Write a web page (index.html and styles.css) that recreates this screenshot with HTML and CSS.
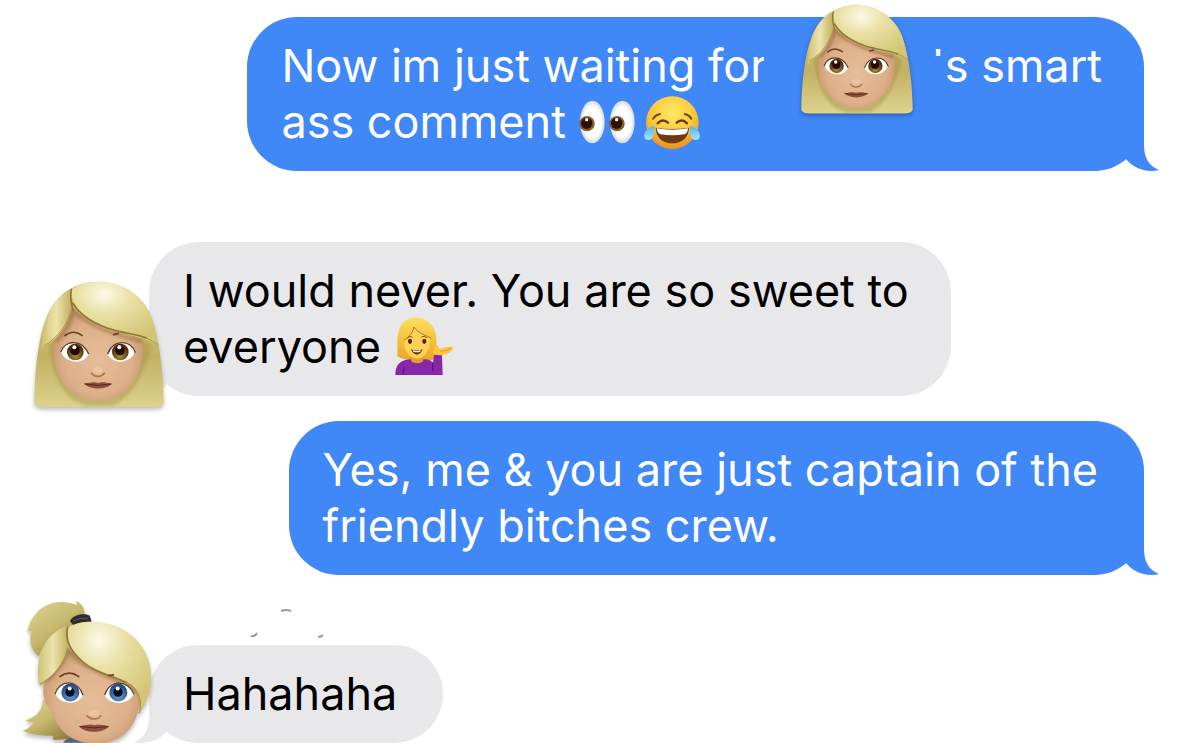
FILE: index.html
```html
<!DOCTYPE html>
<html lang="en">

<head>
    <meta charset="UTF-8">
    <meta name="viewport" content="width=device-width, initial-scale=1.0">
    <title>Messages</title>
    <link rel="stylesheet" href="styles.css">
</head>

<body>

    <!-- Shared drawings -->
    <svg class="defs" aria-hidden="true">
        <defs>
            <linearGradient id="hairBack" x1="0" y1="0" x2="0" y2="1">
                <stop offset="0" stop-color="#d8cc80"/>
                <stop offset=".6" stop-color="#c2b164"/>
                <stop offset="1" stop-color="#ddd28c"/>
            </linearGradient>
            <radialGradient id="hairFront" cx=".38" cy=".2" r=".8">
                <stop offset="0" stop-color="#fcfae6"/>
                <stop offset=".4" stop-color="#e9e0a4"/>
                <stop offset="1" stop-color="#d3c574"/>
            </radialGradient>
            <linearGradient id="hairSide" x1="0" y1="0" x2="1" y2="0">
                <stop offset="0" stop-color="#cfc172"/>
                <stop offset=".5" stop-color="#ece4ad"/>
                <stop offset="1" stop-color="#c3b15d"/>
            </linearGradient>
            <linearGradient id="ponytail" x1="0" y1="0" x2=".8" y2="1">
                <stop offset="0" stop-color="#ded391"/>
                <stop offset=".5" stop-color="#c8b96f"/>
                <stop offset="1" stop-color="#8f7c3b"/>
            </linearGradient>
            <radialGradient id="skin" cx=".5" cy=".55" r=".55">
                <stop offset="0" stop-color="#e6bd98"/>
                <stop offset=".7" stop-color="#ddb08a"/>
                <stop offset="1" stop-color="#c59670"/>
            </radialGradient>
            <radialGradient id="irisBrown" cx=".5" cy=".75" r=".6">
                <stop offset="0" stop-color="#b08a2e"/>
                <stop offset="1" stop-color="#4d2a10"/>
            </radialGradient>
            <radialGradient id="irisBlue" cx=".5" cy=".7" r=".6">
                <stop offset="0" stop-color="#6f9fd8"/>
                <stop offset="1" stop-color="#244a86"/>
            </radialGradient>
            <radialGradient id="joyFace" cx=".5" cy=".3" r=".7">
                <stop offset="0" stop-color="#ffe767"/>
                <stop offset=".6" stop-color="#fcc838"/>
                <stop offset="1" stop-color="#e88f20"/>
            </radialGradient>
            <radialGradient id="eyeball" cx=".5" cy=".5" r=".5">
                <stop offset=".7" stop-color="#ffffff"/>
                <stop offset="1" stop-color="#d5d9e2"/>
            </radialGradient>
            <linearGradient id="goldHair" x1="0" y1="0" x2="0" y2="1">
                <stop offset="0" stop-color="#ffdf5c"/>
                <stop offset="1" stop-color="#e9a526"/>
            </linearGradient>
            <linearGradient id="tear" x1="0" y1="0" x2="0" y2="1">
                <stop offset="0" stop-color="#4db4ec"/>
                <stop offset="1" stop-color="#a4e4fb"/>
            </linearGradient>
            <filter id="soft"><feGaussianBlur stdDeviation="4"/></filter>

            <path id="tail" d="M24 0V34C24 47 29 55 39 59C28 62 14 58 6 48V0Z"/>

            <symbol id="woman" viewBox="40 30 396 390">
                <path fill="url(#hairBack)" d="M44 398C45 310 55 210 78 150C106 70 170 35 235 35C308 35 372 78 395 142C422 215 431 320 432 398Q430 410 400 411H72Q46 410 44 398Z"/>
                <path fill="#a08b3f" opacity=".4" filter="url(#soft)" d="M85 222C98 290 110 350 160 390L200 408H280C340 380 375 310 395 225L360 200H110Z"/>
                <path fill="url(#skin)" d="M157 112C150 150 128 185 106 212C100 235 102 260 106 282C116 340 168 394 235 394C302 394 353 340 364 282C369 258 370 232 369 210C290 190 205 160 157 112Z"/>
                <path fill="none" stroke="#9a6c43" stroke-width="10" opacity=".6" filter="url(#soft)" d="M110 215C140 185 157 150 160 120C205 170 290 195 365 214"/>
                <path fill="url(#hairFront)" d="M155 62C172 43 200 35 235 35C308 35 372 78 395 142C404 168 411 196 414 224C370 200 310 192 250 167C198 146 156 108 155 62Z"/>
                <path fill="url(#hairSide)" d="M150 58C162 112 150 188 66 236C70 168 88 92 150 58Z"/>
                <path fill="none" stroke="#8f7833" stroke-width="5" stroke-linecap="round" d="M155 58C150 80 156 105 160 120M160 100C180 135 220 158 262 174C310 190 350 192 380 204"/>
                <path fill="none" stroke="#a9954a" stroke-width="3" d="M157 112C146 160 118 200 72 229M380 204Q400 212 415 224"/>
                <path fill="none" stroke="#67401f" stroke-width="5" stroke-linecap="round" d="M136 197Q160 177 187 196M282 194L296 190"/>
                <path fill="#fff" d="M124 246C135 212 188 208 207 252C196 283 140 284 124 246ZM264 252C282 209 333 211 346 246C330 284 278 283 264 252Z"/>
                <path fill="none" stroke="#5e3b20" stroke-width="4" d="M123 247C137 208 187 206 207 252M264 252C281 207 333 208 347 248"/>
                <circle cx="167" cy="246" r="25" fill="url(#irisBrown)"/>
                <circle cx="302" cy="246" r="25" fill="url(#irisBrown)"/>
                <circle cx="166" cy="242" r="14" fill="#200b04"/>
                <circle cx="301" cy="242" r="14" fill="#200b04"/>
                <circle cx="164" cy="232" r="6" fill="#fff"/>
                <circle cx="299" cy="232" r="6" fill="#fff"/>
                <ellipse cx="235" cy="300" rx="16" ry="9" fill="#ebc5a1"/>
                <path fill="none" stroke="#b0774f" stroke-width="5" stroke-linecap="round" d="M216 310Q223 320 234 319Q247 320 254 310"/>
                <path fill="#8c4f3b" d="M193 341C215 338 224 335 235 339C248 335 256 338 277 341C260 360 212 360 193 341Z"/>
                <path fill="none" stroke="#512b20" stroke-width="3" d="M195 342Q235 350 275 342"/>
            </symbol>

            <symbol id="womanPonytail" viewBox="30 25 399 434">
                <path fill="url(#ponytail)" d="M86 200C62 180 55 150 66 122L53 126C62 72 105 32 165 37C180 38 194 42 202 46L198 33C218 42 226 62 225 82L240 102L150 135C115 150 96 175 86 200Z"/>
                <path fill="url(#ponytail)" d="M98 330C98 360 84 378 47 392C58 399 64 398 72 398C60 412 50 420 38 423C65 436 98 438 130 438L128 450C170 450 190 445 200 440L120 330Z"/>
                <path fill="#54647f" d="M160 459C170 438 210 440 230 459Z"/>
                <path fill="url(#skin)" d="M168 170C150 215 128 250 104 272C93 310 105 350 122 358C140 420 182 459 255 462C320 462 365 430 382 372C394 340 396 310 390 272C310 255 225 225 168 170Z"/>
                <path fill="#2d2c2e" d="M180 94C187 76 220 68 239 77L245 96C225 94 204 98 190 106Z"/>
                <path fill="none" stroke="#5a5a5d" stroke-width="3" d="M190 94Q210 81 234 86"/>
                <path fill="none" stroke="#9a6c43" stroke-width="12" opacity=".6" filter="url(#soft)" d="M110 275C150 230 165 210 174 180C220 245 310 255 384 305"/>
                <path fill="url(#hairFront)" d="M174 112C205 95 243 92 280 99C358 112 418 170 423 250C427 300 410 342 387 373C398 337 387 295 350 278C300 257 246 247 206 205C180 182 165 150 174 112Z"/>
                <path fill="url(#hairSide)" d="M172 108C181 170 168 234 88 286C73 214 96 134 172 108Z"/>
                <path fill="none" stroke="#8f7833" stroke-width="5" stroke-linecap="round" d="M173 112C164 150 182 184 214 212C250 246 300 254 350 278"/>
                <path fill="none" stroke="#a9954a" stroke-width="4" d="M176 176C160 230 126 264 90 284M350 278C387 296 397 335 388 370"/>
                <path fill="none" stroke="#67401f" stroke-width="5" stroke-linecap="round" d="M150 260Q176 240 206 260M296 257L310 255"/>
                <path fill="#fff" d="M136 312C148 271 202 268 219 316C207 347 150 347 136 312ZM284 316C300 268 355 272 371 312C358 348 300 347 284 316Z"/>
                <path fill="none" stroke="#5e4430" stroke-width="4" d="M135 313C148 269 202 266 219 316M284 316C300 266 355 270 372 313"/>
                <circle cx="181" cy="308" r="27" fill="url(#irisBlue)"/>
                <circle cx="325" cy="308" r="27" fill="url(#irisBlue)"/>
                <circle cx="180" cy="307" r="14" fill="#0a1122"/>
                <circle cx="324" cy="307" r="14" fill="#0a1122"/>
                <circle cx="179" cy="296" r="6" fill="#fff"/>
                <circle cx="323" cy="296" r="6" fill="#fff"/>
                <ellipse cx="252" cy="370" rx="17" ry="9" fill="#ebc5a1"/>
                <path fill="none" stroke="#b0774f" stroke-width="5" stroke-linecap="round" d="M231 378Q240 389 252 387Q265 389 272 378"/>
                <path fill="#8c4f3b" d="M207 409C229 406 241 402 253 406C266 402 275 406 297 409C281 431 223 431 207 409Z"/>
                <path fill="none" stroke="#512b20" stroke-width="3" d="M209 410Q252 418 295 410"/>
            </symbol>

            <symbol id="eyes" viewBox="66 42 168 168">
                <ellipse cx="106" cy="126" rx="37" ry="64" fill="url(#eyeball)"/>
                <ellipse cx="196" cy="126" rx="37" ry="64" fill="url(#eyeball)"/>
                <circle cx="90" cy="131" r="23" fill="#8a5a2b"/>
                <circle cx="180" cy="131" r="23" fill="#8a5a2b"/>
                <circle cx="89" cy="130" r="17" fill="#2b1206"/>
                <circle cx="179" cy="130" r="17" fill="#2b1206"/>
                <circle cx="89" cy="119" r="5" fill="#fff"/>
                <circle cx="179" cy="119" r="5" fill="#fff"/>
            </symbol>

            <symbol id="joy" viewBox="261 42 168 168">
                <circle cx="346" cy="128" r="79" fill="url(#joyFace)"/>
                <path fill="none" stroke="#7a4a12" stroke-width="6" stroke-linecap="round" d="M288 116Q295 105 309 102M383 102Q397 105 403 116"/>
                <path fill="none" stroke="#6a3d10" stroke-width="7" stroke-linecap="round" d="M302 130Q317 114 333 128M359 128Q375 114 390 130"/>
                <path fill="#6d3a14" d="M296 143Q346 151 396 143C395 172 376 190 346 190S297 172 296 143Z"/>
                <path fill="#fff" d="M299 145Q346 153 393 145Q393 159 382 163Q346 169 310 163Q300 158 299 145Z"/>
                <path fill="url(#tear)" d="M293 137C278 140 262 151 261 168C262 184 282 184 288 170C292 160 291 150 293 137ZM399 137C414 140 428 151 429 168C428 184 408 184 402 170C398 160 399 150 399 137Z"/>
            </symbol>

            <symbol id="tippingHand" viewBox="38 24 180 180">
                <path fill="url(#goldHair)" d="M48 142C50 110 44 85 54 60C62 34 86 24 108 26C140 28 162 52 165 86C167 108 162 130 170 148C150 158 70 158 48 142Z"/>
                <path fill="#8628a8" d="M42 198C42 168 56 154 84 151L134 151C145 152 151 156 155 163L158 136Q170 129 182 137L184 198Z"/>
                <path fill="none" stroke="#5d1681" stroke-width="4" d="M68 174L65 198M154 160V186"/>
                <path fill="#dfa126" d="M86 143H128L124 158Q107 168 91 158Z"/>
                <path fill="#ffd256" d="M70 94C83 85 92 72 98 61C113 76 130 80 145 84C149 118 132 149 107 149C82 147 66 124 70 94Z"/>
                <path fill="none" stroke="#b9771a" stroke-width="3" d="M68 94C86 82 95 70 98 54C110 72 130 78 150 88"/>
                <path fill="none" stroke="#8a5417" stroke-width="3" stroke-linecap="round" d="M79 86Q86 79 93 84M121 83Q129 79 136 86"/>
                <ellipse cx="86" cy="97" rx="6" ry="8" fill="#432008"/>
                <ellipse cx="129" cy="97" rx="6" ry="8" fill="#432008"/>
                <path fill="#6b2e12" d="M89 121Q107 128 124 121Q119 136 107 137Q94 136 89 121Z"/>
                <path fill="#fff" d="M94 124Q107 129 119 124L117 128Q107 132 96 128Z"/>
                <path fill="#ffc43e" d="M157 137C153 126 159 108 169 107L174 120C190 117 200 112 214 113Q218 118 211 124C206 133 194 137 181 139Z"/>
                <path fill="none" stroke="#d08f20" stroke-width="2" d="M176 127Q194 126 209 118"/>
            </symbol>
        </defs>
    </svg>

    <main class="chat">
        <div class="row sent gap-large">
            <div class="bubble with-emoji">
                Now im just waiting for<span class="cover"><svg class="cover-face" role="img" aria-label="Woman"><use href="#woman"/></svg></span><span class="apostrophe">'</span>s smart<br>
                ass comment <svg class="emoji" role="img" aria-label="Eyes"><use href="#eyes"/></svg><svg class="emoji emoji-next" role="img" aria-label="Tears of joy"><use href="#joy"/></svg>
                <svg class="tail" viewBox="0 0 40 60"><use href="#tail"/></svg>
            </div>
        </div>

        <div class="row received gap-small">
            <svg class="avatar" role="img" aria-label="Woman"><use href="#woman"/></svg>
            <div class="bubble with-emoji">
                I would never. You are so sweet to<br>
                everyone <svg class="emoji emoji-hand" role="img" aria-label="Woman tipping hand"><use href="#tippingHand"/></svg>
                <svg class="tail" viewBox="0 0 40 60"><use href="#tail"/></svg>
            </div>
        </div>

        <div class="row sent">
            <div class="bubble">
                Yes, me &amp; you are just captain of the<br>
                friendly bitches crew.
                <svg class="tail" viewBox="0 0 40 60"><use href="#tail"/></svg>
            </div>
        </div>

        <!-- Sender name, rubbed out -->
        <div class="sender">
            <svg class="sender-marks" viewBox="0 0 76 30">
                <path d="M32 3Q37 1 42 3M2 28Q6 29 8 25M69 29Q72 29 74 27"/>
            </svg>
        </div>

        <div class="row received">
            <svg class="avatar avatar-ponytail" role="img" aria-label="Woman with ponytail"><use href="#womanPonytail"/></svg>
            <div class="bubble">
                Hahahaha
                <svg class="tail" viewBox="0 0 40 60"><use href="#tail"/></svg>
            </div>
        </div>
    </main>

</body>

</html>
```

FILE: styles.css
```css
* {
    box-sizing: border-box;
}

body {
    margin: 0;
    background-color: #ffffff;
    font-family: Inter, "Liberation Sans", sans-serif;
    font-size: 45px;
    line-height: 56px;
}

.defs {
    position: absolute;
    width: 0;
    height: 0;
}

.chat {
    display: flex;
    flex-direction: column;
    padding-top: 17px;
}

/* Message rows */
.row {
    display: flex;
    position: relative;
}

.sent {
    justify-content: flex-end;
    padding-right: 56px;
}

.received {
    padding-left: 149px;
}

.gap-large {
    margin-bottom: 71px;
}

.gap-small {
    margin-bottom: 25px;
}

.bubble {
    position: relative;
    padding: 21px 46px 21px 34px;
    border-radius: 50px;
    white-space: nowrap;
}

.with-emoji {
    padding-right: 42px;
}

.sent .bubble {
    background-color: #4087f7;
    color: #ffffff;
}

.received .bubble {
    background-color: #e8e8ea;
    color: #000000;
}

/* Bubble tails */
.tail {
    position: absolute;
    right: -16px;
    bottom: 0;
    width: 40px;
    height: 60px;
    fill: #4087f7;
}

.received .tail {
    right: auto;
    left: -16px;
    transform: scaleX(-1);
    fill: #e8e8ea;
}

/* Emoji inside the text */
.emoji {
    width: 56px;
    height: 56px;
    margin: -10px 0;
    vertical-align: -2px;
}

.emoji-next {
    margin-left: 9px;
}

.emoji-hand {
    width: 60px;
    height: 60px;
    vertical-align: -4px;
}

/* Hidden name with a face over it */
.cover {
    display: inline-block;
    position: relative;
    width: 167px;
    height: 40px;
    margin-left: -3px;
    vertical-align: middle;
    background-color: #4087f7;
}

.cover-face {
    position: absolute;
    top: -46px;
    left: 36px;
    width: 114px;
    height: 112px;
    filter: drop-shadow(0 2px 2px rgba(0, 0, 0, 0.3));
}

.apostrophe {
    display: inline-block;
    height: 56px;
    vertical-align: top;
    clip-path: inset(0 0 38px 0);
}

/* Avatars */
.avatar {
    position: absolute;
    left: 33px;
    bottom: -14px;
    z-index: 1;
    width: 132px;
    height: 130px;
    filter: drop-shadow(0 3px 2px rgba(0, 0, 0, 0.25));
}

.avatar-ponytail {
    left: 20px;
    bottom: 0;
    width: 133px;
    height: 145px;
}

.sender {
    display: flex;
    align-items: center;
    height: 70px;
    padding-left: 249px;
}

.sender-marks {
    width: 76px;
    height: 30px;
    margin-top: 26px;
    fill: none;
    stroke: #9a9a9a;
    stroke-width: 2;
}
```
